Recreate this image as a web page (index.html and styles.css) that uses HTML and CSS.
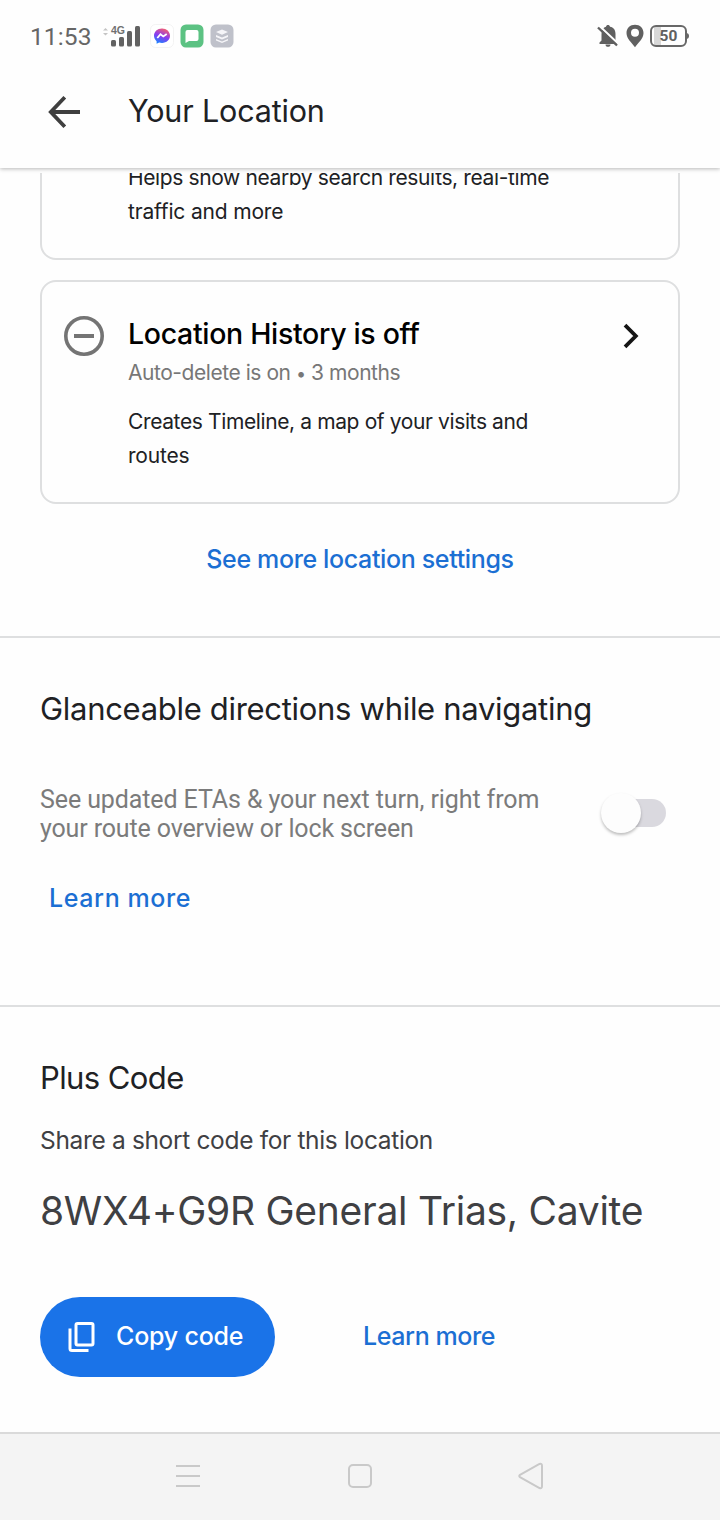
FILE: index.html
```html
<!DOCTYPE html>
<html lang="en">
<head>
<meta charset="utf-8">
<title>Your Location</title>
<link rel="stylesheet" href="styles.css">
</head>
<body>
<div class="status-bar">
  <span class="clock">11:53</span>
  <svg class="signal" width="40" height="26" viewBox="0 0 40 26">
    <path d="M0 5.500 2.500 3 5 5.500zM0 8 2.500 10.500 5 8z" fill="#c4c4c4"/>
    <text class="signal-label" x="8" y="9">4G</text>
    <g fill="#626262"><rect x="8" y="15" width="5" height="6.500" rx="1.500"/><rect x="16" y="12" width="5" height="9.500" rx="1.500"/><rect x="24" y="6" width="5" height="15.500" rx="1.500"/><rect x="32" y="1" width="5" height="20.500" rx="1.500"/></g>
  </svg>
  <svg class="messenger" width="24" height="24" viewBox="0 0 24 24">
    <defs><linearGradient id="mg" x1="0.300" y1="1" x2="0.700" y2="0"><stop offset="0" stop-color="#1685ff"/><stop offset=".5" stop-color="#8a3bf0"/><stop offset="1" stop-color="#f8606c"/></linearGradient></defs>
    <rect x=".5" y=".5" width="23" height="23" rx="5" fill="#fff" stroke="#f3f3f3"/>
    <path d="M12 4.500c-4.600 0-8 3.200-8 7.300 0 2.200 1 4.100 2.600 5.400v2.600l2.500-1.300c.9.300 1.900.4 2.900.4 4.600 0 8-3 8-7.100s-3.400-7.300-8-7.300z" fill="url(#mg)"/>
    <path d="M7.300 14l3.200-3.800 2.800 2.200 3.400-2.400" fill="none" stroke="#fff" stroke-width="1.800"/>
  </svg>
  <svg class="chat" width="24" height="24" viewBox="0 0 24 24">
    <rect x=".5" y=".5" width="23" height="23" rx="5.500" fill="#5cc283"/>
    <path d="M7.500 6h9a2 2 0 0 1 2 2v7a2 2 0 0 1-2 2H9l-3.500 2V8a2 2 0 0 1 2-2z" fill="#fff"/>
  </svg>
  <svg class="layers" width="24" height="24" viewBox="0 0 24 24">
    <rect x=".5" y=".5" width="23" height="23" rx="5.500" fill="#bfc1ca"/>
    <path d="M12 5.500 18 8 12 10.800 6 8zM6 11l6 2.500 6-2.500v2l-6 2.500-6-2.500zM6 15l6 2.500 6-2.500v1.500l-6 2.500-6-2.500z" fill="#f5f5f8"/>
  </svg>
  <svg class="bell" width="22" height="24" viewBox="0 0 22 24">
    <path d="M2.500 20v-1.500l2-2V10c0-4 2-6.500 4.500-7.200C9.200 1.600 10 1 11 1s1.800.6 2 1.800c3.500.7 5.500 3.200 5.500 7.200v6.500l1.500 2V20z M8.500 20.500h5c0 1.500-1 2.300-2.500 2.300s-2.500-.8-2.500-2.300z" fill="#606060"/>
    <path d="M2.500 2 21 19.500" stroke="#fff" stroke-width="2.200"/><path d="M1 3.500 20 21.500" stroke="#606060" stroke-width="2.400"/>
  </svg>
  <svg class="pin" width="18" height="24" viewBox="0 0 18 24">
    <path fill-rule="evenodd" d="M9 .7C4 .7.500 4.200.5 9c0 5.500 5 9.500 8.500 14.200 3.500-4.700 8.500-8.700 8.500-14.200C17.500 4.200 14 .7 9 .7zM9 4.800a4 4 0 1 1 0 8 4 4 0 0 1 0-8z" fill="#606060"/>
  </svg>
  <div class="battery"><span class="battery-level">50</span></div>
</div>

<header class="app-bar">
  <svg width="34" height="34" viewBox="0 0 34 34" fill="none" stroke="#3f3f3f" stroke-width="3.800"><path d="M32 17H4M16.800 2.300 2.800 17l14 14.700"/></svg>
  <h1 class="app-title">Your Location</h1>
</header>

<main class="content">
  <section class="card card-cut">
    <p class="card-text"><span class="helps">Helps show nearby search results, real-time</span><br><span class="traffic">traffic and more</span></p>
  </section>
  <section class="card card-history">
    <svg class="off-icon" width="40" height="40" viewBox="0 0 40 40" fill="none" stroke="#747474"><circle cx="20" cy="20" r="18.200" stroke-width="3.600"/><path d="M10 20h20" stroke-width="4"/></svg>
    <div class="card-body">
      <h2 class="card-title">Location History is off</h2>
      <p class="card-sub">Auto-delete is on <span class="dot">•</span> 3 months</p>
      <p class="card-text"><span class="creates">Creates Timeline, a map of your visits and</span><br><span class="routes">routes</span></p>
    </div>
    <svg class="chevron" width="18" height="26" viewBox="0 0 18 26" fill="none" stroke="#151515" stroke-width="3.800"><path d="M2 2.200 12.800 13 2 23.800"/></svg>
  </section>
  <a class="link link-settings">See more location settings</a>

  <section class="section glance">
    <h2 class="section-title glance-title">Glanceable directions while navigating</h2>
    <div class="setting">
      <p class="setting-text"><span class="eta">See updated ETAs &amp; your next turn, right from</span><br><span class="route">your route overview or lock screen</span></p>
      <div class="switch"><div class="knob"></div></div>
    </div>
    <a class="link link-glance">Learn more</a>
  </section>

  <section class="section plus">
    <h2 class="section-title plus-title">Plus Code</h2>
    <p class="plus-sub">Share a short code for this location</p>
    <p class="plus-code">8WX4+G9R General Trias, Cavite</p>
    <div class="actions">
      <div class="button">
        <svg width="28" height="32" viewBox="0 0 28 32" fill="none" stroke="#fff" stroke-width="3"><rect x="8" y="2.400" width="17" height="21.600" rx="1.500"/><path d="M2 7.500V27.500a2 2 0 0 0 2 2h16.500"/></svg>
        <span class="button-label">Copy code</span>
      </div>
      <a class="link link-plus">Learn more</a>
    </div>
  </section>
</main>

<nav class="nav-bar">
  <svg width="26" height="26" viewBox="0 0 26 26" stroke="#c9c9c9" stroke-width="2"><path d="M1 3h24M1 13h24M1 23h24"/></svg>
  <svg width="26" height="26" viewBox="0 0 26 26" fill="none" stroke="#c9c9c9" stroke-width="2"><rect x="2" y="2" width="22" height="22" rx="4"/></svg>
  <svg width="26" height="28" viewBox="0 0 26 28" fill="none" stroke="#c9c9c9" stroke-width="2"><path d="M2 12.800 21.500 2q2.500-1 2.500 1.800v20.400q0 2.800-2.500 1.800L2 15.200q-1.500-1.200 0-2.400z"/></svg>
</nav>
</body>
</html>
```
FILE: styles.css
```css
* { box-sizing: border-box; }
body { margin: 0; width: 720px; height: 1520px; overflow: hidden; display: flex; flex-direction: column; background: #fefefe; color: #202124; font-family: Inter, "Open Sans", sans-serif; }
h1, h2, p { margin: 0; font-weight: 400; white-space: nowrap; }
svg { flex: none; display: block; }

.status-bar { height: 72px; flex: none; display: flex; align-items: center; padding: 0 30px; }
.clock { width: 71px; font: 24.500px/30px Roboto, sans-serif; color: #666; letter-spacing: .1px; padding-top: 1px; }
.signal { margin: 3px 9px 0 2px; }
.signal-label { font: 700 10.500px "Liberation Sans", sans-serif; fill: #707070; }
.messenger { margin-left: -2px; }
.chat { margin-left: 6px; }
.layers { margin-left: 6px; }
.bell { margin-left: auto; }
.pin { margin: 0 6px 0 7px; }
.battery { position: relative; width: 37px; height: 22px; margin-right: 3px; border: 2px solid #686868; border-radius: 6px; background: linear-gradient(90deg, #fff 2px, #d8d8d8 2px, #d8d8d8 9px, #fff 9px); text-align: center; }
.battery::after { content: ""; position: absolute; right: -4px; top: 6px; width: 3px; height: 6px; border-radius: 0 3px 3px 0; background: #686868; }
.battery-level { display: block; font: 700 15.500px/18px Roboto, sans-serif; color: #606060; }

.app-bar { position: relative; z-index: 1; height: 96px; flex: none; display: flex; align-items: center; padding: 0 48px 16px; background: #fefefe; box-shadow: 0 1px 4px rgba(0,0,0,.28); clip-path: inset(0 0 -6px 0); }
.app-title { margin: -2px 0 0 46px; font-size: 30.500px; line-height: 40px; letter-spacing: -.16px; }

.content { flex: 1; min-height: 0; overflow: hidden; margin-top: 5px; display: flex; flex-direction: column; background: #fefefe; }
.card { flex: none; margin: 0 40px; border: 2px solid #dedfe0; border-radius: 16px; }
.card-cut { margin-top: -33px; height: 120px; padding: 19px 0 0 86px; }
.card-history { margin-top: 20px; height: 224px; display: flex; padding: 33px 36px 0 22px; }
.off-icon { margin-top: 1px; }
.card-body { flex: 1; min-width: 0; margin-left: 24px; }
.card-title { padding-top: 1px; font-size: 28.500px; line-height: 36px; font-weight: 500; color: #000; letter-spacing: -.32px; }
.card-sub { margin-top: 7px; font-size: 21px; line-height: 28px; color: #777; letter-spacing: -.45px; }
.dot { font-size: 18px; }
.card-body .card-text { margin-top: 17px; }
.card-text { font-size: 21px; line-height: 34px; letter-spacing: -.2px; }
.helps, .creates { letter-spacing: -.38px; }
.traffic { letter-spacing: -.17px; }
.chevron { margin: 8px 1px 0 -1px; }

.link { display: block; color: #1b6fd3; font-size: 25px; line-height: 32px; font-weight: 500; letter-spacing: -.4px; white-space: nowrap; }
.link-settings { align-self: center; margin-top: 39px; margin-bottom: 61px; letter-spacing: -.36px; }

.section { flex: none; border-top: 2px solid #dedfe0; padding: 0 40px; }
.section-title { font-size: 31px; line-height: 40px; letter-spacing: -.3px; }
.glance { height: 369px; padding-top: 51px; }
.setting { display: flex; justify-content: space-between; margin-top: 56px; }
.setting-text { font: 25px/29px Roboto, sans-serif; color: #7b7b7b; letter-spacing: -.1px; }
.route { letter-spacing: -.14px; }
.switch { width: 66px; height: 28px; margin: 14px 14px 0 0; border-radius: 14px; background: linear-gradient(90deg, transparent 20px, #dad9df 20px); }
.knob { width: 40px; height: 40px; margin: -6px 0 0 1px; border-radius: 50%; background: #fdfdfd; box-shadow: 0 2px 3px rgba(0,0,0,.25); }
.link-glance { margin: 39px 0 0 9px; letter-spacing: .6px; }
.plus { height: 427px; padding-top: 51px; }
.plus-title { letter-spacing: -.6px; }
.plus-sub { margin-top: 26px; font-size: 24.500px; line-height: 32px; letter-spacing: -.34px; color: #3f4043; }
.plus-code { margin-top: 30px; font-size: 39px; line-height: 50px; letter-spacing: -.27px; color: #3f4043; }
.actions { display: flex; align-items: center; margin-top: 61px; }
.button { width: 235px; height: 80px; display: flex; align-items: center; padding-left: 28px; border-radius: 40px; background: #1a73e8; color: #fff; }
.button-label { margin: -2px 0 0 20px; font-size: 25px; font-weight: 500; line-height: 32px; letter-spacing: -.2px; white-space: nowrap; }
.link-plus { margin: -2px 0 0 88px; }

.nav-bar { height: 88px; flex: none; display: flex; align-items: center; justify-content: space-between; padding: 0 176px 2px 175px; border-top: 2px solid #dadada; background: #f4f4f4; }
```
